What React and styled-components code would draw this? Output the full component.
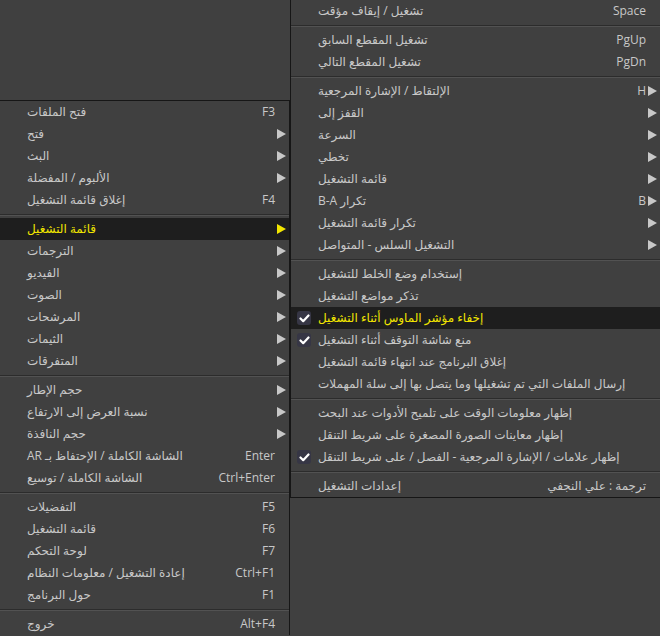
import React from 'react';
import styled, { createGlobalStyle } from 'styled-components';

const GlobalStyle = createGlobalStyle`
  html, body {
    margin: 0;
    padding: 0;
    background: #404040;
  }
`;

const Screen = styled.div`
  width: 660px;
  height: 636px;
  overflow: hidden;
  display: flex;
  align-items: flex-start;
  background: #404040;
  font-family: "Open Sans", "DejaVu Sans", sans-serif;
  font-size: 12px;
  color: #c8c8c8;
`;

const Menu = styled.div`
  box-sizing: border-box;
  background: #404040;
  display: flex;
  flex-direction: column;
  flex-shrink: 0;
`;

const LeftMenu = styled(Menu)`
  width: 290px;
  margin-top: 100px;
  border-top: 1px solid #161616;
  border-right: 1px solid #161616;
`;

const RightMenu = styled(Menu)`
  width: 370px;
  margin-top: -1px;
  border: 1px solid #161616;
  border-right: none;
`;

const Row = styled.div`
  height: 22px;
  display: flex;
  align-items: center;
  padding-left: 6px;
  background: ${(p) => (p.$active ? '#1e1e1e' : 'transparent')};
  color: ${(p) => (p.$active ? '#f2e600' : '#c8c8c8')};
`;

const CheckSlot = styled.div`
  width: 21px;
  height: 14px;
  flex-shrink: 0;
  display: flex;
  align-items: center;
`;

const CheckBox = styled.div`
  width: 14px;
  height: 14px;
  border-radius: 3px;
  background: #363645;
  display: flex;
  align-items: center;
  justify-content: center;
`;

const Label = styled.span`
  flex: 1;
  direction: rtl;
  text-align: left;
  white-space: nowrap;
  line-height: 22px;
`;

const LabelText = styled.span`
  display: inline-block;
`;

const Shortcut = styled.span`
  white-space: nowrap;
  line-height: 22px;
  direction: ${(p) => (p.$rtl ? 'rtl' : 'ltr')};
`;

const ArrowSlot = styled.div`
  width: 14px;
  flex-shrink: 0;
  display: flex;
  align-items: center;
  padding-left: 2px;
  box-sizing: border-box;
`;

const Arrow = styled.div`
  width: 0;
  height: 0;
  border-top: 5px solid transparent;
  border-bottom: 5px solid transparent;
  border-left: 9px solid ${(p) => (p.$active ? '#f2e600' : '#c8c8c8')};
`;

const Separator = styled.div`
  height: 7px;
  display: flex;
  flex-direction: column;
  justify-content: center;

  &::before {
    content: '';
    height: 1px;
    background: #2c2c2c;
  }
  &::after {
    content: '';
    height: 1px;
    background: #525252;
  }
`;

const Check = () => (
  <svg width="11" height="9" viewBox="0 0 11 9">
    <polyline points="1.5,4.5 4.2,7.2 9.5,1.5" fill="none" stroke="#ffffff" strokeWidth="2.2" strokeLinecap="round" strokeLinejoin="round" />
  </svg>
);

const leftItems = [
  { label: 'فتح الملفات', key: 'F3' },
  { label: 'فتح', sub: true },
  { label: 'البث', sub: true },
  { label: 'الألبوم / المفضلة', sub: true },
  { label: 'إغلاق قائمة التشغيل', key: 'F4' },
  'sep',
  { label: 'قائمة التشغيل', sub: true, active: true },
  { label: 'الترجمات', sub: true },
  { label: 'الفيديو', sub: true },
  { label: 'الصوت', sub: true },
  { label: 'المرشحات', sub: true },
  { label: 'الثيمات', sub: true },
  { label: 'المتفرقات', sub: true },
  'sep',
  { label: 'حجم الإطار', sub: true },
  { label: 'نسبة العرض إلى الارتفاع', sub: true },
  { label: 'حجم النافذة', sub: true },
  { label: 'الشاشة الكاملة / الإحتفاظ بـ AR', key: 'Enter' },
  { label: 'الشاشة الكاملة / توسيع', key: 'Ctrl+Enter' },
  'sep',
  { label: 'التفضيلات', key: 'F5' },
  { label: 'قائمة التشغيل', key: 'F6' },
  { label: 'لوحة التحكم', key: 'F7' },
  { label: 'إعادة التشغيل / معلومات النظام', key: 'Ctrl+F1' },
  { label: 'حول البرنامج', key: 'F1' },
  'sep',
  { label: 'خروج', key: 'Alt+F4' },
];

const rightItems = [
  { label: 'تشغيل / إيقاف مؤقت', key: 'Space' },
  'sep',
  { label: 'تشغيل المقطع السابق', key: 'PgUp' },
  { label: 'تشغيل المقطع التالي', key: 'PgDn' },
  'sep',
  { label: 'الإلتقاط / الإشارة المرجعية', key: 'H', sub: true },
  { label: 'القفز إلى', sub: true },
  { label: 'السرعة', sub: true },
  { label: 'تخطي', sub: true },
  { label: 'قائمة التشغيل', sub: true },
  { label: 'تكرار B-A', key: 'B', sub: true },
  { label: 'تكرار قائمة التشغيل', sub: true },
  { label: 'التشغيل السلس - المتواصل', sub: true },
  'sep',
  { label: 'إستخدام وضع الخلط للتشغيل' },
  { label: 'تذكر مواضع التشغيل' },
  { label: 'إخفاء مؤشر الماوس أثناء التشغيل', checked: true, active: true },
  { label: 'منع شاشة التوقف أثناء التشغيل', checked: true },
  { label: 'إغلاق البرنامج عند انتهاء قائمة التشغيل' },
  { label: 'إرسال الملفات التي تم تشغيلها وما يتصل بها إلى سلة المهملات' },
  'sep',
  { label: 'إظهار معلومات الوقت على تلميح الأدوات عند البحث' },
  { label: 'إظهار معاينات الصورة المصغرة على شريط التنقل' },
  { label: 'إظهار علامات / الإشارة المرجعية - الفصل / على شريط التنقل', checked: true },
  'sep',
  { label: 'إعدادات التشغيل', key: 'ترجمة : علي النجفي', rtlKey: true },
];

const MenuRow = ({ item }) => (
  <Row $active={item.active}>
    <CheckSlot>
      {item.checked && (
        <CheckBox>
          <Check />
        </CheckBox>
      )}
    </CheckSlot>
    <Label>
      <LabelText>{item.label}</LabelText>
    </Label>
    {item.key && <Shortcut $rtl={item.rtlKey}>{item.key}</Shortcut>}
    <ArrowSlot>{item.sub && <Arrow $active={item.active} />}</ArrowSlot>
  </Row>
);

const renderItems = (items) =>
  items.map((item, i) =>
    item === 'sep' ? <Separator key={i} /> : <MenuRow key={i} item={item} />
  );

const App = () => (
  <>
    <GlobalStyle />
    <Screen>
      <LeftMenu>{renderItems(leftItems)}</LeftMenu>
      <RightMenu>{renderItems(rightItems)}</RightMenu>
    </Screen>
  </>
);

export default App;
